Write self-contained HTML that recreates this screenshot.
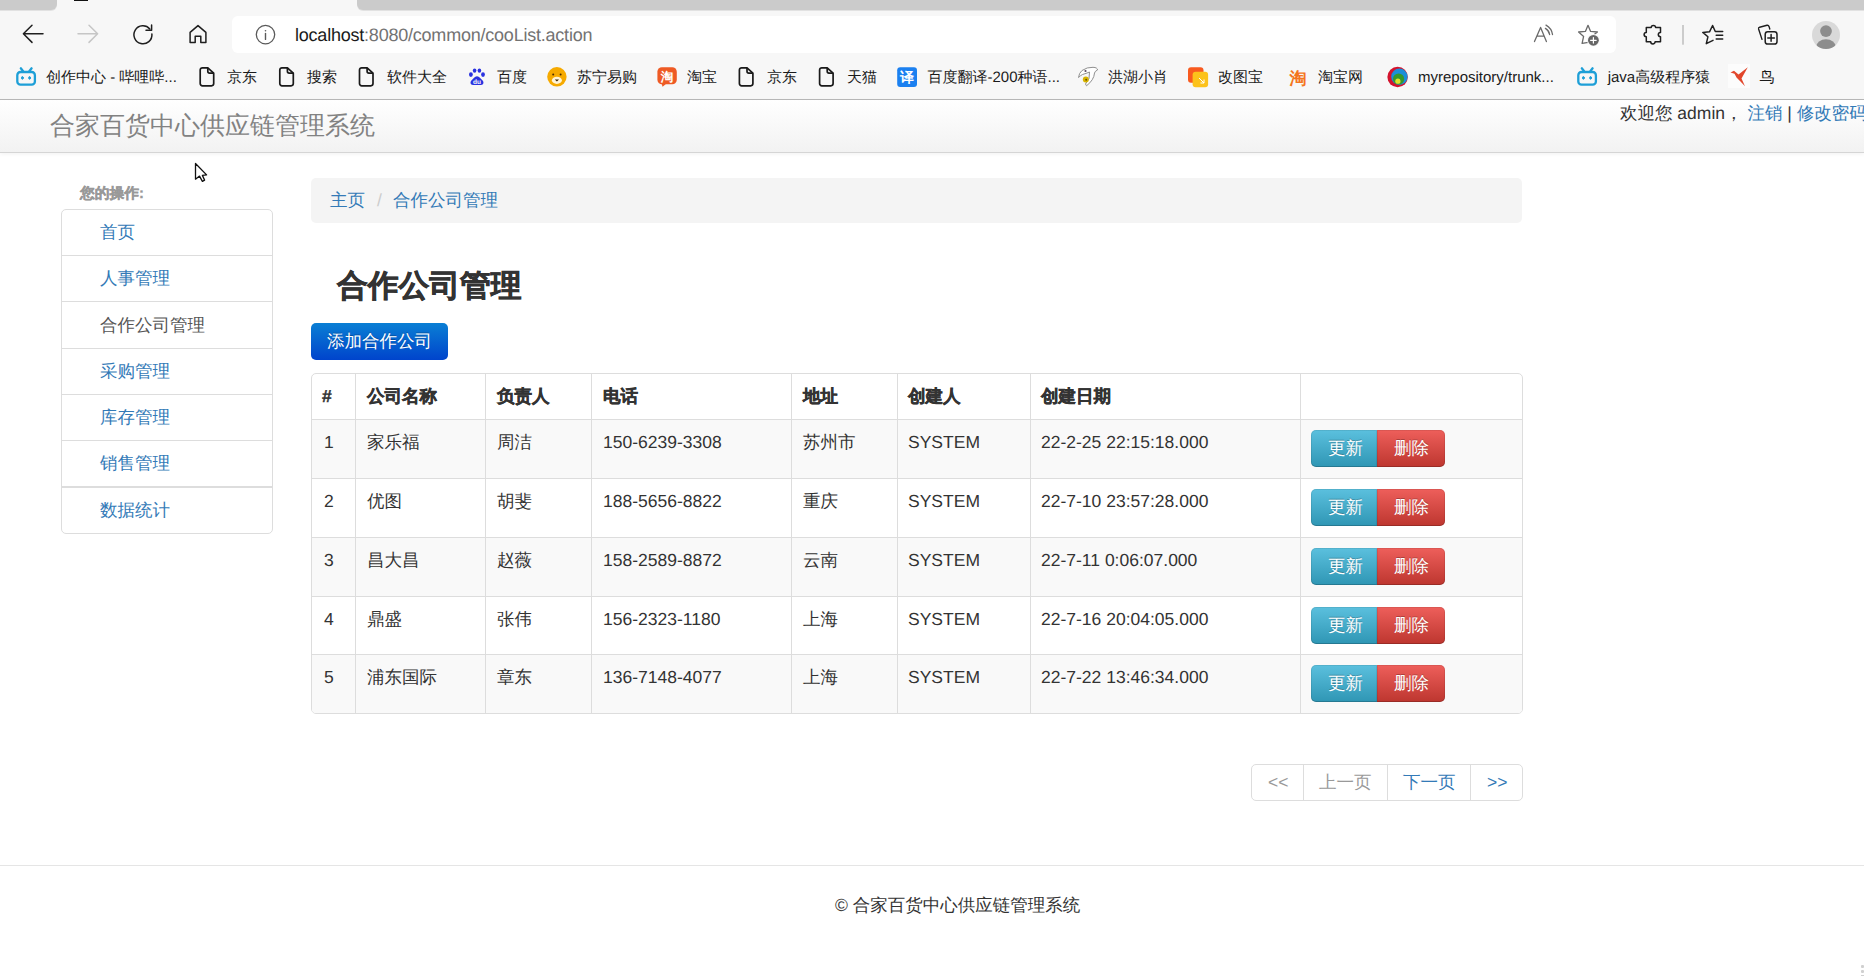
<!DOCTYPE html>
<html><head><meta charset="utf-8">
<style>
html,body{margin:0;padding:0;}
body{width:1864px;height:976px;overflow:hidden;position:relative;background:#fff;font-family:"Liberation Sans",sans-serif;color:#333;text-rendering:geometricPrecision;}
.a{position:absolute;white-space:nowrap;}
/* browser chrome */
#chrome{position:absolute;left:0;top:0;width:1864px;height:99px;background:#f7f7f7;}
#tabL{left:0;top:0;width:57px;height:10px;background:#cbcbcb;border-bottom-right-radius:6px;box-shadow:0 1px 0 #e2e2e2;}
#tabR{left:357px;top:0;width:1507px;height:10px;background:#cbcbcb;border-bottom-left-radius:6px;box-shadow:0 1px 0 #e2e2e2;}
#addr{left:232px;top:16px;width:1384px;height:37px;background:#fff;border-radius:6px;}
#chromeline{left:0;top:99px;width:1864px;height:1px;background:#b9b9b9;box-shadow:0 1px 0 #dcdcdc;}
.bm{font-size:15px;color:#1a1a1a;top:68px;line-height:20px;}
/* navbar */
#nav{left:0;top:100px;width:1864px;height:52px;background:linear-gradient(to bottom,#fff 0,#f2f2f2 100%);border-bottom:1px solid #d5d5d5;box-shadow:0 1px 4px rgba(0,0,0,.06);}
.lg{left:61px;width:210px;border:1px solid #ddd;background:#fff;}
.li{font-size:17.5px;color:#337ab7;left:100px;line-height:20px;}
.th{font-size:17.5px;font-weight:bold;color:#333;line-height:20px;-webkit-text-stroke:0.4px #333;}
.td{font-size:17.5px;color:#333;line-height:20px;}
.vl{width:1px;background:#ddd;}
.hl{height:1px;background:#ddd;}
.btn-i{width:66px;height:37px;background:linear-gradient(to bottom,#5bc0de 0,#2f96b4 100%);border-radius:5px 0 0 5px;box-shadow:inset 0 0 0 1px rgba(0,0,0,.08),inset 0 -1px 0 rgba(0,0,0,.12);}
.btn-d{width:68px;height:37px;background:linear-gradient(to bottom,#ee5f5b 0,#bd362f 100%);border-radius:0 5px 5px 0;box-shadow:inset 0 0 0 1px rgba(0,0,0,.08),inset 0 -1px 0 rgba(0,0,0,.12);}
.bt{font-size:17.5px;color:#fff;line-height:20px;text-shadow:0 -1px 0 rgba(0,0,0,.25);}
.pg{font-size:17.5px;line-height:20px;}
</style></head><body>
<div id="chrome">
  <div class="a" id="tabL"></div>
  <div class="a" id="tabR"></div>
  <div class="a" style="left:74px;top:0;width:14px;height:1px;background:#111;"></div>
  <div class="a" id="addr"></div>
  <svg class="a" style="left:0;top:0" width="1864" height="100" viewBox="0 0 1864 100">
    <defs>
      <g id="doc" fill="none" stroke="#1a1a1a" stroke-width="1.7" stroke-linejoin="round">
        <path d="M207.8 67.8H202.4a2.2 2.2 0 0 0-2.2 2.2V83.6a2.2 2.2 0 0 0 2.2 2.2H211.5a2.2 2.2 0 0 0 2.2-2.2V73.2Z"/>
        <path d="M207.8 67.8V71.3a1.8 1.8 0 0 0 1.8 1.8H213.7"/>
      </g>
      <g id="bili" fill="none" stroke="#1e9fd7" stroke-width="2.3" stroke-linecap="round">
        <rect x="17.3" y="72" width="17.6" height="12.6" rx="3.2"/>
        <path d="M20.8 68.3L23.1 71.2M31.6 68.3L29.3 71.2"/>
        <ellipse cx="22.4" cy="77.9" rx="0.9" ry="1.3" fill="#1e9fd7" stroke-width="1"/>
        <ellipse cx="29.6" cy="77.9" rx="0.9" ry="1.3" fill="#1e9fd7" stroke-width="1"/>
      </g>
      <clipPath id="avc"><circle cx="1826" cy="35" r="14"/></clipPath>
    </defs>
    <g fill="none" stroke-linecap="round" stroke-linejoin="round">
      <path d="M43 33.8H23.6M32 25.2L23.4 33.8L32 42.4" stroke="#1f1f1f" stroke-width="1.5"/>
      <path d="M78 33.8H97.4M89 25.2L97.6 33.8L89 42.4" stroke="#c6c6c6" stroke-width="1.5"/>
      <path d="M149.8 29A9 9 0 1 0 151.9 34" stroke="#1f1f1f" stroke-width="1.5"/>
      <path d="M146 30.2H151.6V25" stroke="#1f1f1f" stroke-width="1.5"/>
      <path d="M190.1 42.5V32.4L198 25.6L205.9 32.4V42.5H200.8V36.3H195.2V42.5Z" stroke="#1f1f1f" stroke-width="1.5"/>
      <circle cx="265.5" cy="34.6" r="9.2" stroke="#5a5a5a" stroke-width="1.3"/>
      <path d="M265.5 33.4V39.4" stroke="#5a5a5a" stroke-width="1.4"/>
      <circle cx="265.5" cy="30.7" r="0.8" fill="#5a5a5a" stroke="none"/>
      <path d="M1534.5 41.6L1540.6 27.4L1546.4 41.6M1537 36.1H1543.9" stroke="#6a6a6a" stroke-width="1.3"/>
      <path d="M1545.4 28.4Q1549 30.5 1549.6 34.5M1546 25.1Q1551.8 28.5 1552.5 34.5" stroke="#6a6a6a" stroke-width="1.3"/>
      <path d="M1591.5 41.8L1582.1 43.3L1583.6 36.4L1578.6 32L1585.4 31.4L1588 25.3L1590.6 31.4L1597.4 32L1593 35.5" stroke="#6a6a6a" stroke-width="1.3"/>
      <circle cx="1593.4" cy="40.3" r="6.3" fill="#f7f7f7" stroke="none"/>
      <circle cx="1593.4" cy="40.3" r="5.4" fill="#666" stroke="none"/>
      <path d="M1593.4 37.5V43.1M1590.6 40.3H1596.2" stroke="#fff" stroke-width="1.2"/>
      <path d="M1646.3 27.6H1651.2A2.2 2.2 0 0 1 1655.6 27.6H1660.5V32.4A2.2 2.2 0 0 0 1660.5 36.8V41.7H1655.1A2.2 2.2 0 0 1 1650.7 41.7H1646.3V36.8A2.2 2.2 0 0 1 1646.3 32.4Z" stroke="#1f1f1f" stroke-width="1.5"/>
      <rect x="1682.3" y="25" width="1.4" height="19.7" fill="#b9b9b9" stroke="none"/>
      <path d="M1713 40.3L1706.3 43.6L1707.9 36.8L1702.8 32.4L1709.5 31.8L1712.6 25.5L1715.3 31.5H1722.7M1716.2 35.2H1722.7M1716.2 39.1H1722.7" stroke="#1f1f1f" stroke-width="1.5"/>
      <path d="M1762 39.4L1758.6 29Q1758.2 27.6 1759.6 27.2L1767 25.3Q1768.5 25 1769 26.4L1769.8 29" stroke="#1f1f1f" stroke-width="1.4"/>
      <rect x="1765.2" y="31.8" width="11.8" height="12.2" rx="2.6" stroke="#1f1f1f" stroke-width="1.5"/>
      <path d="M1771.1 34.6V41.2M1767.8 37.9H1774.4" stroke="#1f1f1f" stroke-width="1.5"/>
    </g>
    <circle cx="1826" cy="35" r="14" fill="#d9d9d9"/>
    <g clip-path="url(#avc)" fill="#8d8d8d">
      <circle cx="1826" cy="31.1" r="5.9"/>
      <ellipse cx="1826" cy="47" rx="9.8" ry="7.8"/>
    </g>
    <!-- bookmarks favicons -->
    <use href="#bili"/>
    <use href="#doc" x="0.0" y="0"/><use href="#doc" x="79.6" y="0"/><use href="#doc" x="159.3" y="0"/><use href="#doc" x="539.2" y="0"/><use href="#doc" x="619.4" y="0"/>
    <g fill="#2a33e0">
      <ellipse cx="470.9" cy="74.6" rx="1.9" ry="2.3"/>
      <ellipse cx="474.6" cy="70.6" rx="1.8" ry="2.2"/>
      <ellipse cx="479.4" cy="70.6" rx="1.8" ry="2.2"/>
      <ellipse cx="483" cy="74.6" rx="1.9" ry="2.3"/>
      <path d="M477 76.2C474.5 76.2 473.5 78.6 471.6 80.3C469.8 81.9 470.3 85 473 85H481C483.7 85 484.2 81.9 482.4 80.3C480.5 78.6 479.5 76.2 477 76.2Z"/>
    </g>
    <text x="477" y="83.8" font-size="6.5" font-weight="bold" fill="#fff" text-anchor="middle" font-family="Liberation Sans">du</text>
    <circle cx="556.9" cy="76.8" r="9.7" fill="#f6aa00"/>
    <ellipse cx="556.9" cy="80.3" rx="5" ry="3.6" fill="#fff4d8"/>
    <circle cx="553.2" cy="74.5" r="1" fill="#4a2a00"/><circle cx="560.6" cy="74.5" r="1" fill="#4a2a00"/>
    <path d="M554.8 79.6H559L556.9 81.6Z" fill="#3a2200"/>
    <rect x="657.4" y="67.3" width="19.4" height="17" rx="4.5" fill="#ee5a24"/>
    <path d="M661.5 83.5H666.5L662.6 86.8Z" fill="#ee5a24"/>
    <text x="667.1" y="81.2" font-size="12.5" font-weight="bold" fill="#fff" text-anchor="middle" font-family="Liberation Sans">淘</text>
    <rect x="897.2" y="67.2" width="19.8" height="19.8" rx="3" fill="#1b80f0"/>
    <text x="907.1" y="82.2" font-size="14" font-weight="bold" fill="#fff" text-anchor="middle" font-family="Liberation Sans">译</text>
    <path d="M1082 70.5Q1087 67 1093 67.3Q1097.5 67.5 1097.5 70Q1095 71 1094.5 73Q1094 80 1086.5 85.8L1085.5 84Q1090.5 79 1089.5 72Q1086 73.5 1082.5 74.5Q1080.5 75.5 1078.5 77.5Q1079 73 1082 70.5Z" fill="#fff" stroke="#8f8f8f" stroke-width="1"/>
    <circle cx="1085.8" cy="79.6" r="3" fill="#d8b400"/><circle cx="1086.2" cy="79.8" r="1" fill="#6a5200"/><circle cx="1085.5" cy="71" r="1.1" fill="#5a4a60"/>
    <rect x="1188" y="67.2" width="15.5" height="15.5" rx="3" fill="#f85a1f"/>
    <rect x="1192.6" y="71.8" width="15.5" height="15.5" rx="3" fill="#fcc21b"/>
    <path d="M1199 78L1204 83M1204 79.5V83H1200.5" stroke="#fff" stroke-width="1" fill="none"/>
    <text x="1298" y="84" font-size="17" font-weight="bold" fill="#f47520" text-anchor="middle" font-family="Liberation Sans">淘</text>
    <circle cx="1397.6" cy="77" r="10.2" fill="#d3132d"/>
    <circle cx="1399.4" cy="76.7" r="8.2" fill="#1b8fd8"/>
    <circle cx="1398.6" cy="79" r="5.6" fill="#36982c"/>
    <circle cx="1397.9" cy="81.2" r="2.6" fill="#dfe02a"/>
    <use href="#bili" x="1561"/>
    <rect x="1728" y="64" width="22" height="24" fill="#fcfcfc"/><path d="M1730.5 72.5L1734 70.8L1738.5 74.5L1747.8 67.2L1741.5 78.5L1745 86.3L1740 81L1736.5 77.5L1734.5 73.8Z" fill="#e2472c"/>
  </svg>
</div>
<div class="a" id="chromeline"></div>
<div class="a" id="url" style="left:295px;top:25px;font-size:18px;letter-spacing:-0.22px;line-height:20px;color:#1a1a1a;">localhost<span style="color:#737373">:8080/common/cooList.action</span></div>
<div class="a bm" style="left:46px;">创作中心 - 哔哩哔...</div>
<div class="a bm" style="left:227px;">京东</div>
<div class="a bm" style="left:307px;">搜索</div>
<div class="a bm" style="left:387px;">软件大全</div>
<div class="a bm" style="left:497px;">百度</div>
<div class="a bm" style="left:577px;">苏宁易购</div>
<div class="a bm" style="left:687px;">淘宝</div>
<div class="a bm" style="left:767px;">京东</div>
<div class="a bm" style="left:847px;">天猫</div>
<div class="a bm" style="left:927.5px;">百度翻译-200种语...</div>
<div class="a bm" style="left:1108px;">洪湖小肖</div>
<div class="a bm" style="left:1218px;">改图宝</div>
<div class="a bm" style="left:1318px;">淘宝网</div>
<div class="a bm" style="left:1418px;">myrepository/trunk...</div>
<div class="a bm" style="left:1607.7px;">java高级程序猿</div>
<div class="a bm" style="left:1759.5px;">鸟</div>


<div class="a" id="nav"></div>
<div class="a" style="left:50px;top:111px;font-size:25px;color:#828282;line-height:30px;">合家百货中心供应链管理系统</div>
<div class="a" style="left:1620px;top:102px;font-size:17.5px;color:#333;line-height:22px;">欢迎您 admin，&nbsp;<span style="color:#337ab7">注销</span> | <span style="color:#337ab7">修改密码</span></div>

<!-- sidebar -->
<div class="a" style="left:80px;top:185px;font-size:14.75px;font-weight:bold;color:#999;line-height:18px;-webkit-text-stroke:0.3px #999;">您的操作:</div>
<div class="a lg" style="top:209px;height:323px;border-radius:5px;"></div>
<div class="a hl" style="left:62px;top:255px;width:210px;"></div>
<div class="a hl" style="left:62px;top:301px;width:210px;"></div>
<div class="a hl" style="left:62px;top:348px;width:210px;"></div>
<div class="a hl" style="left:62px;top:394px;width:210px;"></div>
<div class="a hl" style="left:62px;top:440px;width:210px;"></div>
<div class="a hl" style="left:62px;top:486px;width:210px;height:2px;"></div>
<div class="a li" style="top:222px;">首页</div>
<div class="a li" style="top:268px;">人事管理</div>
<div class="a li" style="top:315px;color:#555;">合作公司管理</div>
<div class="a li" style="top:361px;">采购管理</div>
<div class="a li" style="top:407px;">库存管理</div>
<div class="a li" style="top:453px;">销售管理</div>
<div class="a li" style="top:500px;">数据统计</div>

<!-- breadcrumb -->
<div class="a" style="left:311px;top:178px;width:1211px;height:45px;background:#f4f4f4;border-radius:5px;"></div>
<div class="a" style="left:330px;top:190px;font-size:17.5px;line-height:20px;color:#337ab7;">主页<span style="color:#ccc;padding:0 11px 0 12px;">/</span>合作公司管理</div>

<!-- heading -->
<div class="a" style="left:337px;top:268px;font-size:30.75px;font-weight:bold;color:#333;line-height:36px;-webkit-text-stroke:0.6px #333;">合作公司管理</div>
<div class="a" style="left:311px;top:323px;width:137px;height:37px;border-radius:5px;background:linear-gradient(to bottom,#0a7fd4 0,#0044cc 100%);"></div>
<div class="a" style="left:327px;top:331px;font-size:17.5px;color:#fff;line-height:20px;text-shadow:0 -1px 0 rgba(0,0,0,.25);">添加合作公司</div>

<!-- table -->
<div class="a" style="left:311px;top:373px;width:1210px;height:339px;border:1px solid #ddd;border-radius:5px;background:#fff;overflow:hidden;">
<div class="a" style="left:0;top:46px;width:1210px;height:59px;background:#f9f9f9;"></div>
<div class="a" style="left:0;top:164px;width:1210px;height:59px;background:#f9f9f9;"></div>
<div class="a" style="left:0;top:281px;width:1210px;height:59px;background:#f9f9f9;"></div>
</div>
<div class="a hl" style="left:312px;top:419px;width:1210px;"></div>
<div class="a hl" style="left:312px;top:478px;width:1210px;"></div>
<div class="a hl" style="left:312px;top:537px;width:1210px;"></div>
<div class="a hl" style="left:312px;top:596px;width:1210px;"></div>
<div class="a hl" style="left:312px;top:654px;width:1210px;"></div>
<div class="a vl" style="left:355px;top:374px;height:339px;"></div>
<div class="a vl" style="left:485px;top:374px;height:339px;"></div>
<div class="a vl" style="left:591px;top:374px;height:339px;"></div>
<div class="a vl" style="left:791px;top:374px;height:339px;"></div>
<div class="a vl" style="left:897px;top:374px;height:339px;"></div>
<div class="a vl" style="left:1030px;top:374px;height:339px;"></div>
<div class="a vl" style="left:1300px;top:374px;height:339px;"></div>
<div class="a th" style="left:322px;top:386px;">#</div>
<div class="a th" style="left:367px;top:386px;">公司名称</div>
<div class="a th" style="left:497px;top:386px;">负责人</div>
<div class="a th" style="left:603px;top:386px;">电话</div>
<div class="a th" style="left:803px;top:386px;">地址</div>
<div class="a th" style="left:908px;top:386px;">创建人</div>
<div class="a th" style="left:1041px;top:386px;">创建日期</div>
<div class="a td" style="left:324px;top:432px;">1</div>
<div class="a td" style="left:367px;top:432px;">家乐福</div>
<div class="a td" style="left:497px;top:432px;">周洁</div>
<div class="a td" style="left:603px;top:432px;">150-6239-3308</div>
<div class="a td" style="left:803px;top:432px;">苏州市</div>
<div class="a td" style="left:908px;top:432px;">SYSTEM</div>
<div class="a td" style="left:1041px;top:432px;">22-2-25 22:15:18.000</div>
<div class="a btn-i" style="left:1311px;top:430px;"></div>
<div class="a btn-d" style="left:1377px;top:430px;"></div>
<div class="a bt" style="left:1328px;top:438px;">更新</div>
<div class="a bt" style="left:1394px;top:438px;">删除</div>
<div class="a td" style="left:324px;top:491px;">2</div>
<div class="a td" style="left:367px;top:491px;">优图</div>
<div class="a td" style="left:497px;top:491px;">胡斐</div>
<div class="a td" style="left:603px;top:491px;">188-5656-8822</div>
<div class="a td" style="left:803px;top:491px;">重庆</div>
<div class="a td" style="left:908px;top:491px;">SYSTEM</div>
<div class="a td" style="left:1041px;top:491px;">22-7-10 23:57:28.000</div>
<div class="a btn-i" style="left:1311px;top:489px;"></div>
<div class="a btn-d" style="left:1377px;top:489px;"></div>
<div class="a bt" style="left:1328px;top:497px;">更新</div>
<div class="a bt" style="left:1394px;top:497px;">删除</div>
<div class="a td" style="left:324px;top:550px;">3</div>
<div class="a td" style="left:367px;top:550px;">昌大昌</div>
<div class="a td" style="left:497px;top:550px;">赵薇</div>
<div class="a td" style="left:603px;top:550px;">158-2589-8872</div>
<div class="a td" style="left:803px;top:550px;">云南</div>
<div class="a td" style="left:908px;top:550px;">SYSTEM</div>
<div class="a td" style="left:1041px;top:550px;">22-7-11 0:06:07.000</div>
<div class="a btn-i" style="left:1311px;top:548px;"></div>
<div class="a btn-d" style="left:1377px;top:548px;"></div>
<div class="a bt" style="left:1328px;top:556px;">更新</div>
<div class="a bt" style="left:1394px;top:556px;">删除</div>
<div class="a td" style="left:324px;top:609px;">4</div>
<div class="a td" style="left:367px;top:609px;">鼎盛</div>
<div class="a td" style="left:497px;top:609px;">张伟</div>
<div class="a td" style="left:603px;top:609px;">156-2323-1180</div>
<div class="a td" style="left:803px;top:609px;">上海</div>
<div class="a td" style="left:908px;top:609px;">SYSTEM</div>
<div class="a td" style="left:1041px;top:609px;">22-7-16 20:04:05.000</div>
<div class="a btn-i" style="left:1311px;top:607px;"></div>
<div class="a btn-d" style="left:1377px;top:607px;"></div>
<div class="a bt" style="left:1328px;top:615px;">更新</div>
<div class="a bt" style="left:1394px;top:615px;">删除</div>
<div class="a td" style="left:324px;top:667px;">5</div>
<div class="a td" style="left:367px;top:667px;">浦东国际</div>
<div class="a td" style="left:497px;top:667px;">章东</div>
<div class="a td" style="left:603px;top:667px;">136-7148-4077</div>
<div class="a td" style="left:803px;top:667px;">上海</div>
<div class="a td" style="left:908px;top:667px;">SYSTEM</div>
<div class="a td" style="left:1041px;top:667px;">22-7-22 13:46:34.000</div>
<div class="a btn-i" style="left:1311px;top:665px;"></div>
<div class="a btn-d" style="left:1377px;top:665px;"></div>
<div class="a bt" style="left:1328px;top:673px;">更新</div>
<div class="a bt" style="left:1394px;top:673px;">删除</div>
<!-- pagination -->
<div class="a" style="left:1251px;top:764px;width:270px;height:35px;border:1px solid #ddd;border-radius:5px;"></div>
<div class="a vl" style="left:1303px;top:765px;height:35px;"></div>
<div class="a vl" style="left:1387px;top:765px;height:35px;"></div>
<div class="a vl" style="left:1470px;top:765px;height:35px;"></div>
<div class="a pg" style="left:1268px;top:772px;color:#999;">&lt;&lt;</div>
<div class="a pg" style="left:1319px;top:772px;color:#999;">上一页</div>
<div class="a pg" style="left:1403px;top:772px;color:#337ab7;">下一页</div>
<div class="a pg" style="left:1487px;top:772px;color:#337ab7;">&gt;&gt;</div>

<!-- footer -->
<div class="a" style="left:0;top:865px;width:1864px;height:1px;background:#e5e5e5;"></div>
<div class="a" style="left:835px;top:895px;font-size:17.5px;color:#333;line-height:20px;">© 合家百货中心供应链管理系统</div>
<svg class="a" style="left:0;top:0" width="260" height="200" viewBox="0 0 260 200"><path d="M195.5 163.5V179.2L199.5 176.1L202.4 181.4L204.6 180.1L202.4 175.4L206.6 174.9Z" fill="#fff" stroke="#111" stroke-width="1.3" stroke-linejoin="round"/></svg>
<div class="a" style="left:1861px;top:965px;width:3px;height:3px;background:#d0d0d0;border-radius:1px"></div><div class="a" style="left:1861px;top:970px;width:3px;height:3px;background:#d0d0d0;border-radius:1px"></div><div class="a" style="left:1861px;top:975px;width:3px;height:1px;background:#d0d0d0;"></div>
</body></html>
